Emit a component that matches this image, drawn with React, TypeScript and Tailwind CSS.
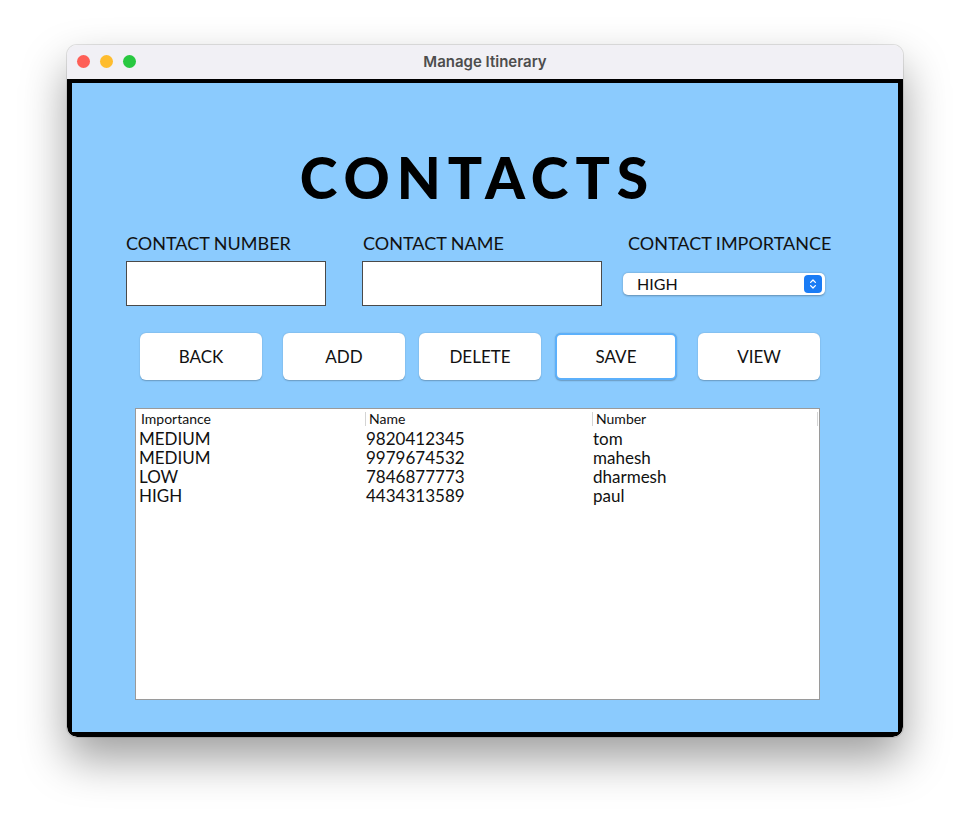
import React from "react";

const rows = [
  { importance: "MEDIUM", name: "9820412345", number: "tom" },
  { importance: "MEDIUM", name: "9979674532", number: "mahesh" },
  { importance: "LOW", name: "7846877773", number: "dharmesh" },
  { importance: "HIGH", name: "4434313589", number: "paul" },
];

const buttons = [
  { label: "BACK", ml: "ml-0" },
  { label: "ADD", ml: "ml-[21px]" },
  { label: "DELETE", ml: "ml-[14px]" },
  { label: "SAVE", ml: "ml-[14px]", focused: true },
  { label: "VIEW", ml: "ml-[21px]" },
];

export default function App() {
  return (
    <div className="min-h-screen bg-white pl-[67px] pt-[45px] font-['Lato','Noto_Sans',sans-serif]">
      <div className="w-[836px] h-[692px] rounded-[10px] overflow-hidden flex flex-col shadow-[0_22px_45px_rgba(0,0,0,0.38)] ring-1 ring-black/10">
        {/* title bar */}
        <div className="relative h-[34px] bg-[#f1f0f5] flex items-center justify-center shrink-0">
          <div className="absolute left-[10px] top-[10px] flex gap-[10px]">
            <span className="w-[13px] h-[13px] rounded-full bg-[#fe5f57]" />
            <span className="w-[13px] h-[13px] rounded-full bg-[#febc2e]" />
            <span className="w-[13px] h-[13px] rounded-full bg-[#28c840]" />
          </div>
          <span className="text-[15px] font-semibold text-[#4d4d4d] font-['Inter',sans-serif]">
            Manage Itinerary
          </span>
        </div>

        {/* frame */}
        <div className="flex-1 bg-black pt-[4px] px-[5px] pb-[5px] rounded-b-[10px] flex">
          <div className="flex-1 bg-[#8bcbfe] flex flex-col text-[#111]">
            <h1 className="mt-[66px] pr-[15px] text-center text-[57px] leading-none font-black tracking-[7px] text-black">
              CONTACTS
            </h1>

            {/* fields */}
            <div className="mt-[27px] flex pl-[54px] items-end">
              <div className="w-[200px] flex flex-col">
                <span className="text-[18px] leading-[20px] mb-[8px]">CONTACT NUMBER</span>
                <div className="h-[45px] bg-white border border-[#4a4a4a]" />
              </div>
              <div className="ml-[36px] w-[240px] flex flex-col">
                <span className="text-[18px] leading-[20px] mb-[8px] pl-[1px]">CONTACT NAME</span>
                <div className="h-[45px] bg-white border border-[#4a4a4a]" />
              </div>
              <div className="ml-[21px] w-[202px] flex flex-col">
                <span className="text-[18px] leading-[20px] mb-[8px] pl-[5px] whitespace-nowrap">
                  CONTACT IMPORTANCE
                </span>
                <div className="h-[45px] flex items-center">
                  <div className="w-full h-[22px] bg-white rounded-[5px] shadow-[0_0.5px_2px_rgba(0,0,0,0.3)] flex items-center justify-between pl-[14px] pr-[3px]">
                    <span className="text-[16px] leading-none">HIGH</span>
                    <span className="w-[18px] h-[18px] rounded-[4px] bg-[#1a7cf5] flex items-center justify-center">
                      <svg viewBox="0 0 10 14" className="w-[8px] h-[12px]" fill="none" stroke="white" strokeWidth="1.6" strokeLinecap="round" strokeLinejoin="round">
                        <polyline points="2 5 5 2 8 5" />
                        <polyline points="2 9 5 12 8 9" />
                      </svg>
                    </span>
                  </div>
                </div>
              </div>
            </div>

            {/* buttons */}
            <div className="mt-[27px] flex pl-[68px]">
              {buttons.map((b) => (
                <button
                  key={b.label}
                  className={`${b.ml} w-[122px] h-[47px] bg-white rounded-[6px] text-[17px] text-[#111] shadow-[0_0.5px_1.5px_rgba(0,0,0,0.25)] ${
                    b.focused ? "border-2 border-[#5cb0fb]" : "border border-transparent"
                  }`}
                >
                  {b.label}
                </button>
              ))}
            </div>

            {/* table */}
            <div className="mt-[28px] ml-[63px] w-[685px] h-[292px] bg-white border border-[#9a9a9a]">
              <div className="grid grid-cols-[229px_227px_1fr] h-[20px] items-center text-[14px] leading-none">
                <span className="pl-[5px]">Importance</span>
                <span className="pl-[3px] border-l border-[#d4d4d4]">Name</span>
                <span className="pl-[3px] border-l border-[#d4d4d4] mr-[1px] border-r">Number</span>
              </div>
              {rows.map((r, i) => (
                <div key={i} className="grid grid-cols-[229px_227px_1fr] h-[19px] items-center text-[17px] leading-none">
                  <span className="pl-[3px]">{r.importance}</span>
                  <span className="pl-[1px]">{r.name}</span>
                  <span className="pl-[1px]">{r.number}</span>
                </div>
              ))}
            </div>
          </div>
        </div>
      </div>
    </div>
  );
}
